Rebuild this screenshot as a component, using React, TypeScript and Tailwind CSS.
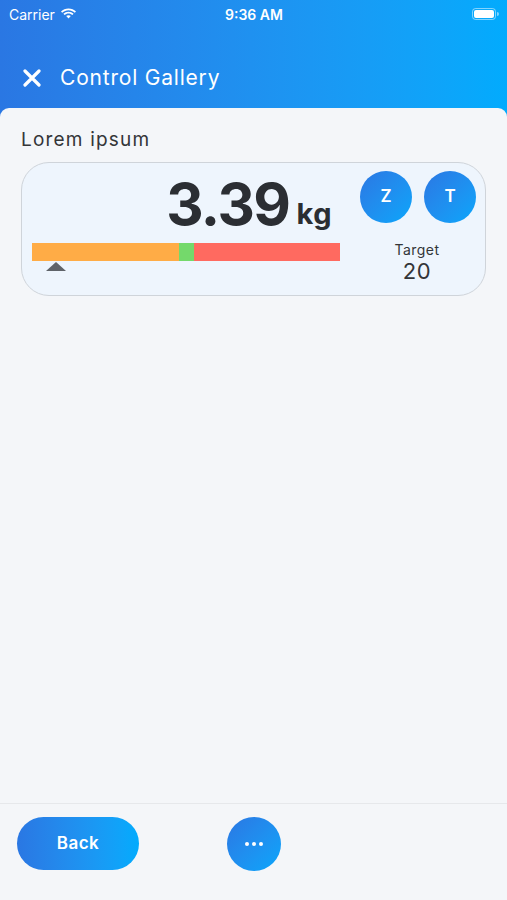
import React from "react";

const font = { fontFamily: "Inter, 'Open Sans', sans-serif" };

export default function App() {
  return (
    <div
      className="w-[507px] h-[900px] flex flex-col bg-gradient-to-r from-[#2a77e3] to-[#02abfd] overflow-hidden"
      style={font}
    >
      {/* Status bar */}
      <div className="h-[28px] flex items-center justify-between pl-[9px] pr-[8px] text-white">
        <div className="flex items-center gap-[5px] w-[100px]">
          <span className="text-[14px]">Carrier</span>
          <svg width="17" height="12" viewBox="0 0 17 12">
            <path d="M8.5 2.2c2.4 0 4.6.9 6.3 2.5l1.2-1.3C14 1.5 11.4.4 8.5.4S3 1.5 1 3.4l1.2 1.3C3.9 3.1 6.1 2.2 8.5 2.2z" fill="white" />
            <path d="M8.5 5.6c1.5 0 2.8.6 3.9 1.5l1.2-1.3C12.2 4.6 10.4 3.8 8.5 3.8S4.8 4.6 3.4 5.8l1.2 1.3c1.1-.9 2.4-1.5 3.9-1.5z" fill="white" />
            <path d="M8.5 7.2c-.9 0-1.7.3-2.3.9l2.3 2.5 2.3-2.5c-.6-.6-1.4-.9-2.3-.9z" fill="white" />
          </svg>
        </div>
        <span className="text-[14px] font-semibold">9:36 AM</span>
        <div className="w-[100px] flex justify-end">
          <div className="flex items-center">
            <div className="w-[24px] h-[12px] rounded-[3.5px] border border-white/50 p-[1px]">
              <div className="w-full h-full rounded-[2px] bg-white" />
            </div>
            <div className="w-[1.5px] h-[4px] bg-white/50 rounded-r-sm ml-[1px]" />
          </div>
        </div>
      </div>
      {/* Nav */}
      <div className="h-[80px] flex items-center pl-[23px] pt-[20px] text-white">
        <svg width="18" height="18" viewBox="0 0 18 18">
          <path d="M2 2 L16 16 M16 2 L2 16" stroke="white" strokeWidth="3.2" strokeLinecap="round" />
        </svg>
        <span className="ml-[19px] text-[21px] font-normal tracking-[0.8px]">Control Gallery</span>
      </div>
      {/* Panel */}
      <div className="flex-1 flex flex-col bg-[#f4f6f9] rounded-t-[9px]">
        <div className="flex-1 px-[21px] pt-[18px]">
          <div className="text-[19px] text-[#333538] leading-[28px] tracking-[1.2px]">Lorem ipsum</div>
          <div className="mt-[8px] h-[134px] rounded-[28px] border border-[#cfd4da] bg-[#eef5fd] flex pl-[10px] pr-[10px] pt-[8px]">
            <div className="w-[308px] flex flex-col">
              <div className="h-[64px] flex items-end justify-end pr-[8px] text-[#2b2e33]">
                <span className="text-[58px] font-bold leading-[62px] tracking-[-1.5px]">3.39</span>
                <span className="text-[29px] font-bold leading-[42px] ml-[7px] tracking-[0.5px]">kg</span>
              </div>
              <div className="mt-[8px] h-[18px] flex">
                <div className="w-[147px] bg-[#ffac46]" />
                <div className="w-[15px] bg-[#74d96b]" />
                <div className="flex-1 bg-[#ff6a60]" />
              </div>
              <div className="ml-[13px] mt-[1px]">
                <svg width="22" height="10" viewBox="0 0 22 10">
                  <path d="M11 0 L21 9 L1 9 Z" fill="#5f6369" />
                </svg>
              </div>
            </div>
            <div className="flex-1 flex flex-col items-end">
              <div className="flex gap-[12px] -mr-[1px]">
                <div className="w-[52px] h-[52px] rounded-full bg-gradient-to-br from-[#2a77e3] to-[#05a6fb] flex items-center justify-center text-white text-[17px] font-semibold">Z</div>
                <div className="w-[52px] h-[52px] rounded-full bg-gradient-to-br from-[#2a77e3] to-[#05a6fb] flex items-center justify-center text-white text-[17px] font-semibold">T</div>
              </div>
              <div className="w-[116px] mt-[18px] flex flex-col items-center text-[#333538]">
                <span className="text-[14px] leading-[17px] tracking-[0.5px]">Target</span>
                <span className="text-[22px] leading-[26px] tracking-[0.5px]">20</span>
              </div>
            </div>
          </div>
        </div>
        {/* Footer */}
        <div className="h-[97px] border-t border-[#e6e8eb] flex items-start pt-[13px] pl-[17px]">
          <div className="w-[122px] h-[53px] rounded-full bg-gradient-to-r from-[#2a77e3] to-[#02abfd] flex items-center justify-center text-white text-[17px] font-semibold tracking-[0.5px]">
            Back
          </div>
          <div className="ml-[88px] w-[54px] h-[54px] rounded-full bg-gradient-to-br from-[#2a77e3] to-[#05a6fb] flex items-center justify-center gap-[3px]">
            <div className="w-[4px] h-[4px] rounded-full bg-white" />
            <div className="w-[4px] h-[4px] rounded-full bg-white" />
            <div className="w-[4px] h-[4px] rounded-full bg-white" />
          </div>
        </div>
      </div>
    </div>
  );
}
